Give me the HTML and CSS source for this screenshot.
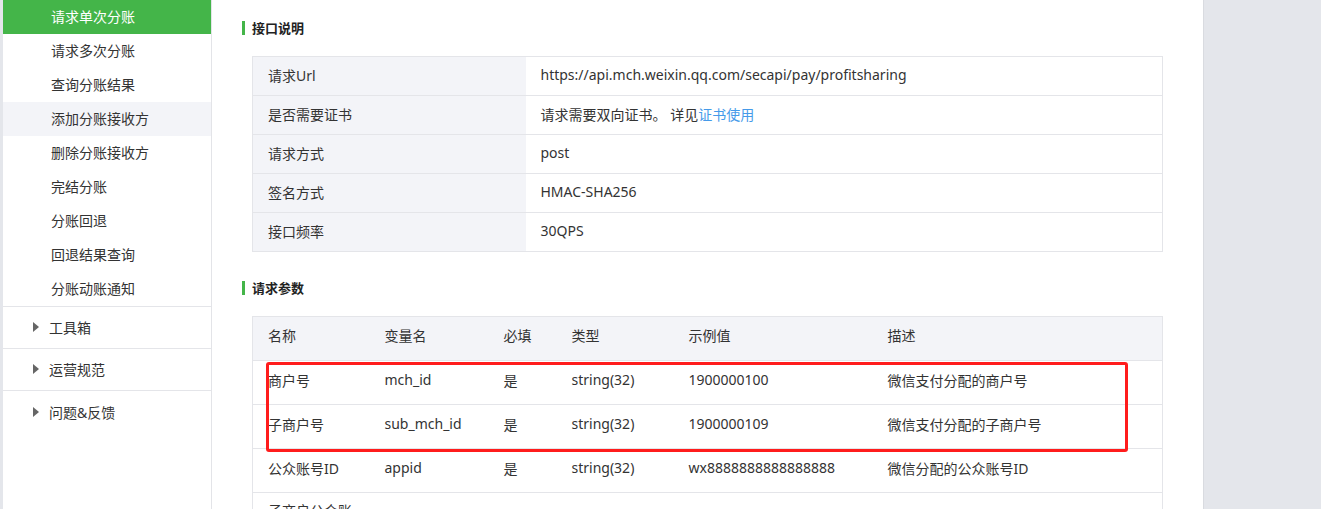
FILE: index.html
```html
<!DOCTYPE html>
<html lang="zh-CN">
<head>
<meta charset="utf-8">
<title>请求单次分账</title>
<link rel="stylesheet" href="styles.css">
</head>
<body>
<div class="page">
  <div class="edge"></div>
  <nav class="sidebar">
    <ul class="sub">
      <li class="item active">请求单次分账</li>
      <li class="item">请求多次分账</li>
      <li class="item">查询分账结果</li>
      <li class="item hover">添加分账接收方</li>
      <li class="item">删除分账接收方</li>
      <li class="item">完结分账</li>
      <li class="item">分账回退</li>
      <li class="item">回退结果查询</li>
      <li class="item">分账动账通知</li>
    </ul>
    <div class="group"><span class="tri"></span>工具箱</div>
    <div class="group"><span class="tri"></span>运营规范</div>
    <div class="group"><span class="tri"></span>问题&amp;反馈</div>
  </nav>
  <main class="content">
    <h3 class="heading">接口说明</h3>
    <table class="info">
      <tr><th>请求Url</th><td>https://api.mch.weixin.qq.com/secapi/pay/profitsharing</td></tr>
      <tr><th>是否需要证书</th><td>请求需要双向证书。 详见<a class="link">证书使用</a></td></tr>
      <tr><th>请求方式</th><td>post</td></tr>
      <tr><th>签名方式</th><td>HMAC-SHA256</td></tr>
      <tr><th>接口频率</th><td>30QPS</td></tr>
    </table>
    <h3 class="heading second">请求参数</h3>
    <div class="params-wrap">
      <table class="params">
        <thead>
          <tr><th class="c1">名称</th><th class="c2">变量名</th><th class="c3">必填</th><th class="c4">类型</th><th class="c5">示例值</th><th>描述</th></tr>
        </thead>
        <tbody>
          <tr><td>商户号</td><td>mch_id</td><td>是</td><td>string(32)</td><td>1900000100</td><td>微信支付分配的商户号</td></tr>
          <tr><td>子商户号</td><td>sub_mch_id</td><td>是</td><td>string(32)</td><td>1900000109</td><td>微信支付分配的子商户号</td></tr>
          <tr><td>公众账号ID</td><td>appid</td><td>是</td><td>string(32)</td><td>wx8888888888888888</td><td>微信分配的公众账号ID</td></tr>
          <tr class="wrap-row"><td>子商户公众账号ID</td><td>sub_appid</td><td>否</td><td>string(32)</td><td>wx8888888888888888</td><td>微信分配的子商户公众账号ID</td></tr>
        </tbody>
      </table>
      <div class="annot"></div>
    </div>
  </main>
  <div class="rightbar"></div>
</div>
</body>
</html>
```
FILE: styles.css
```css
* { box-sizing: border-box; }
html, body { margin: 0; padding: 0; }
body {
  font-family: "Noto Sans", "Noto Sans CJK SC", sans-serif;
  font-size: 14px;
  color: #333;
  background: #fff;
  overflow: hidden;
  height: 509px;
}
.page { display: flex; height: 509px; }
.edge { width: 3px; background: #e4e6eb; flex: none; }
.sidebar {
  width: 209px;
  flex: none;
  border-right: 1px solid #e3e4e8;
  background: #fff;
}
.sub { list-style: none; margin: 0; padding: 0; border-bottom: 1px solid #e4e5e9; }
.item { height: 34px; line-height: 34px; padding-left: 48px; color: #333; }
.item.active { background: #44b549; color: #fff; }
.item.hover { background: #f3f4f8; }
.group {
  height: 42px;
  padding-left: 30px;
  padding-bottom: 1px;
  border-bottom: 1px solid #e4e5e9;
  display: flex;
  align-items: center;
  color: #333;
}
.group:last-child { border-bottom: none; }
.tri {
  width: 0; height: 0;
  border-left: 6px solid #666;
  border-top: 5px solid transparent;
  border-bottom: 5px solid transparent;
  margin-right: 10px;
}
.content { flex: 1; padding: 19px 40px 0 30px; }
.heading {
  margin: 0;
  font-size: 13px;
  font-weight: bold;
  color: #222;
  border-left: 3px solid #44b549;
  padding-left: 7px;
  line-height: 14px;
  height: 14px;
  margin-top: 2px;
}
.heading.second { margin-top: 29px; }
.info {
  margin: 21px 0 0 10px;
  width: 911px;
  border-collapse: collapse;
  border: 1px solid #e4e5e9;
}
.info th, .info td {
  height: 39px;
  border-bottom: 1px solid #e4e5e9;
  text-align: left;
  font-weight: normal;
  padding: 0 15px 3px;
}
.info th { width: 273px; background: #f3f4f8; color: #333; }
.info td { color: #333; }
.link { color: #459ae9; }
.params-wrap { position: relative; margin: 21px 0 0 10px; width: 911px; }
.params {
  width: 911px;
  border-collapse: collapse;
  border: 1px solid #e4e5e9;
  table-layout: fixed;
}
.params th, .params td {
  height: 44px;
  border-bottom: 1px solid #e4e5e9;
  text-align: left;
  font-weight: normal;
  padding: 0 0 6px 15px;
  white-space: nowrap;
}
.params thead th { background: #f3f4f8; padding-bottom: 8px; }
.params .wrap-row td {
  white-space: normal;
  line-height: 20px;
  padding: 8px 10px 8px 15px;
}
.c1 { width: 117px; }
.c2 { width: 119px; }
.c3 { width: 68px; }
.c4 { width: 117px; }
.c5 { width: 199px; }
.annot {
  position: absolute;
  left: 14px;
  top: 46px;
  width: 862px;
  height: 90px;
  border: 3px solid #ff1c1c;
  border-radius: 3px;
}
.rightbar { width: 118px; flex: none; background: #e4e6eb; border-left: 1px solid #d9dbe0; }
```
